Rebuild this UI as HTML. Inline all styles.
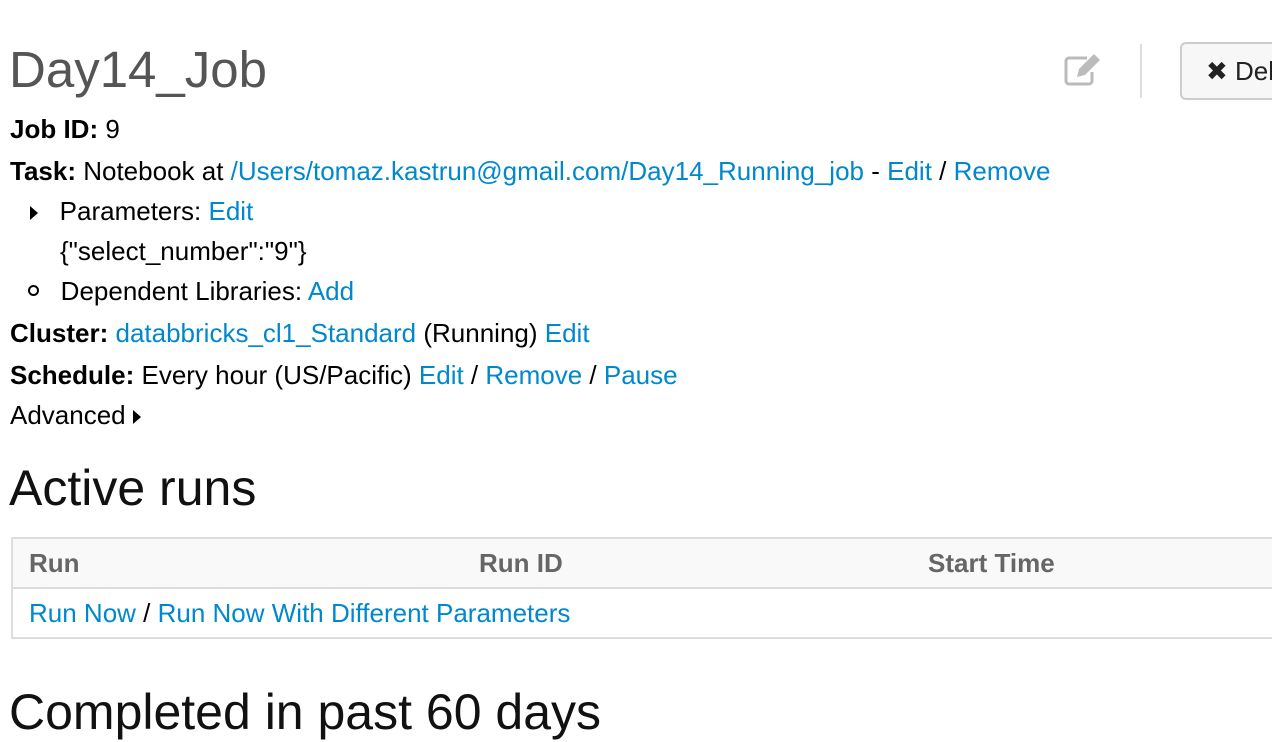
<!DOCTYPE html>
<html><head><meta charset="utf-8"><style>
body{margin:0;width:1272px;height:704px;overflow:hidden;background:#fff;font-family:"Liberation Sans",Arial,sans-serif;color:#000;position:relative}
.l{position:absolute;left:10px;font-size:26px;line-height:30px;white-space:nowrap}
a{color:#0088cc;text-decoration:none}
b{font-weight:bold}
.h{position:absolute;left:9px;font-weight:normal;color:#222;white-space:nowrap}
.tri{display:inline-block;width:0;height:0;border-top:7px solid transparent;border-bottom:7px solid transparent;border-left:8px solid #000;position:relative;top:0px}
table{position:absolute;left:11px;top:537px;width:1300px;border-collapse:collapse;font-size:26px}
th,td{border-top:2px solid #ddd;border-bottom:2px solid #ddd;text-align:left;padding:0 16px;height:48px}
th:first-child,td:first-child{border-left:2px solid #ddd}
th{background:#f9f9f9;color:#666;font-weight:bold}
</style></head><body>
<div class="h" style="top:40px;font-size:51px;line-height:60px;color:#555">Day14_Job</div>
<svg style="position:absolute;left:1063px;top:52px" width="42" height="36" viewBox="0 0 42 36">
<path d="M24 6H6a3 3 0 0 0-3 3v20a3 3 0 0 0 3 3h20a3 3 0 0 0 3-3V20" fill="none" stroke="#bbb" stroke-width="3"/>
<path d="M31 2l6 6-15 15-8 2 2-8z" fill="#bbb"/>
</svg>
<div style="position:absolute;left:1140px;top:44px;width:2px;height:54px;background:#ddd"></div>
<div style="position:absolute;left:1180px;top:42px;width:140px;height:58px;border:2px solid #ccc;border-radius:6px;background:#f7f7f7;box-sizing:border-box;font-size:26px;line-height:54px;padding-left:24px;color:#222;white-space:nowrap">✖ Del</div>
<div class="l" style="top:114px"><b>Job ID:</b> 9</div>
<div class="l" style="top:156px"><b>Task:</b> Notebook at <a>/Users/tomaz.kastrun@gmail.com/Day14_Running_job</a> - <a>Edit</a> / <a>Remove</a></div>
<div class="l" style="top:196px;left:30px"><span class="tri"></span>&nbsp;&nbsp; Parameters: <a>Edit</a></div>
<div class="l" style="top:236px;left:60px">{"select_number":"9"}</div>
<div class="l" style="top:276px;left:28px"><span style="display:inline-block;width:7px;height:7px;border:2px solid #000;border-radius:50%;position:relative;top:-4px"></span>&nbsp;&nbsp; Dependent Libraries: <a>Add</a></div>
<div class="l" style="top:318px"><b>Cluster:</b> <a>databbricks_cl1_Standard</a> (Running) <a>Edit</a></div>
<div class="l" style="top:360px"><b>Schedule:</b> Every hour (US/Pacific) <a>Edit</a> / <a>Remove</a> / <a>Pause</a></div>
<div class="l" style="top:400px">Advanced <span class="tri"></span></div>
<div class="h" style="top:458px;font-size:50px;line-height:60px;color:#111">Active runs</div>
<table>
<tr><th style="width:418px">Run</th><th style="width:417px">Run ID</th><th>Start Time</th></tr>
<tr><td colspan="3"><a>Run Now</a> / <a>Run Now With Different Parameters</a></td></tr>
</table>
<div class="h" style="top:682px;font-size:50px;line-height:60px;color:#111">Completed in past 60 days</div>
</body></html>
